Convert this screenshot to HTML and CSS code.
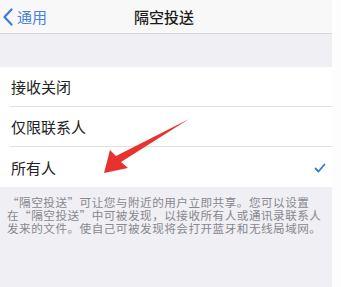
FILE: index.html
```html
<!doctype html>
<html lang="zh-CN">
<head>
  <meta charset="UTF-8"/>
  <meta content="width=device-width, initial-scale=1" name="viewport">
  <title>隔空投送</title>
  <link rel="stylesheet" href="styles.css">
</head>
<body>
<div class="screen">
  <div class="navbar">
    <a class="back" href="#">
      <svg class="chevron" width="10" height="18" viewBox="0 0 10 18">
        <polyline points="8.5,1.5 1.5,9 8.5,16.5" fill="none" stroke="#3b7bd9" stroke-width="2.2" stroke-linecap="round" stroke-linejoin="round"/>
      </svg>
      <span>通用</span>
    </a>
    <div class="title">隔空投送</div>
  </div>

  <div class="spacer"></div>

  <ul class="options">
    <li class="option">接收关闭</li>
    <li class="option">仅限联系人</li>
    <li class="option selected">
      <span>所有人</span>
      <svg class="check" width="12" height="10" viewBox="0 0 12 10">
        <polyline points="1.5,5.5 4.5,8.5 10.5,1.5" fill="none" stroke="#3a78c9" stroke-width="1.8" stroke-linecap="round" stroke-linejoin="round"/>
      </svg>
    </li>
  </ul>

  <p class="footnote">“隔空投送”可让您与附近的用户立即共享。您可以设置<br>在“隔空投送”中可被发现，以接收所有人或通讯录联系人<br>发来的文件。使自己可被发现将会打开蓝牙和无线局域网。</p>

  <!-- red annotation arrow drawn over the list -->
  <svg class="arrow" width="341" height="287" viewBox="0 0 341 287">
    <polygon points="104,173 110,150 116,156 189,119 121,162 128,168" fill="#e8322f"/>
  </svg>
</div>
<div class="edge"></div>
</body>
</html>
```

FILE: styles.css
```css
*, *:before {
  box-sizing: border-box;
}

html, body {
  height: 100%;
}

body {
  margin: 0;
  display: flex;
  background: #fdfdfd;
  font-family: "Noto Sans CJK SC", "Noto Sans", sans-serif;
}

.screen {
  position: relative;
  width: 332px;
  height: 100%;
  background: #efeff4;
  display: flex;
  flex-direction: column;
}

.edge {
  flex: 1;
  background: #fdfdfd;
}

.navbar {
  position: relative;
  height: 34px;
  background: #f8f8f8;
  border-bottom: 1px solid #d8d8da;
  display: flex;
  align-items: center;
  justify-content: center;
}

.navbar .back {
  position: absolute;
  left: 3px;
  top: 0;
  height: 33px;
  display: flex;
  align-items: center;
  gap: 4px;
  color: #4a82d6;
  font-size: 15px;
  text-decoration: none;
}

.navbar .title {
  font-size: 15px;
  font-weight: 500;
  color: #1a1a1a;
  margin-left: -4px;
}

.spacer {
  height: 33px;
}

.options {
  list-style: none;
  margin: 0;
  padding: 0 0 0 10px;
  background: #fff;
}

.option {
  height: 40px;
  display: flex;
  align-items: center;
  justify-content: space-between;
  padding: 0 8px 0 1px;
  font-size: 15px;
  color: #222;
  border-bottom: 1px solid #e2e2e4;
}

.option:last-child {
  border-bottom: none;
}

.option .check {
  margin-top: 2px;
  margin-right: -2px;
}

.footnote {
  margin: 0;
  padding: 9px 0 0 7px;
  font-size: 11.6px;
  line-height: 13px;
  letter-spacing: 0.5px;
  color: #88888d;
}

.arrow {
  position: absolute;
  left: 0;
  top: 0;
  pointer-events: none;
}
```
